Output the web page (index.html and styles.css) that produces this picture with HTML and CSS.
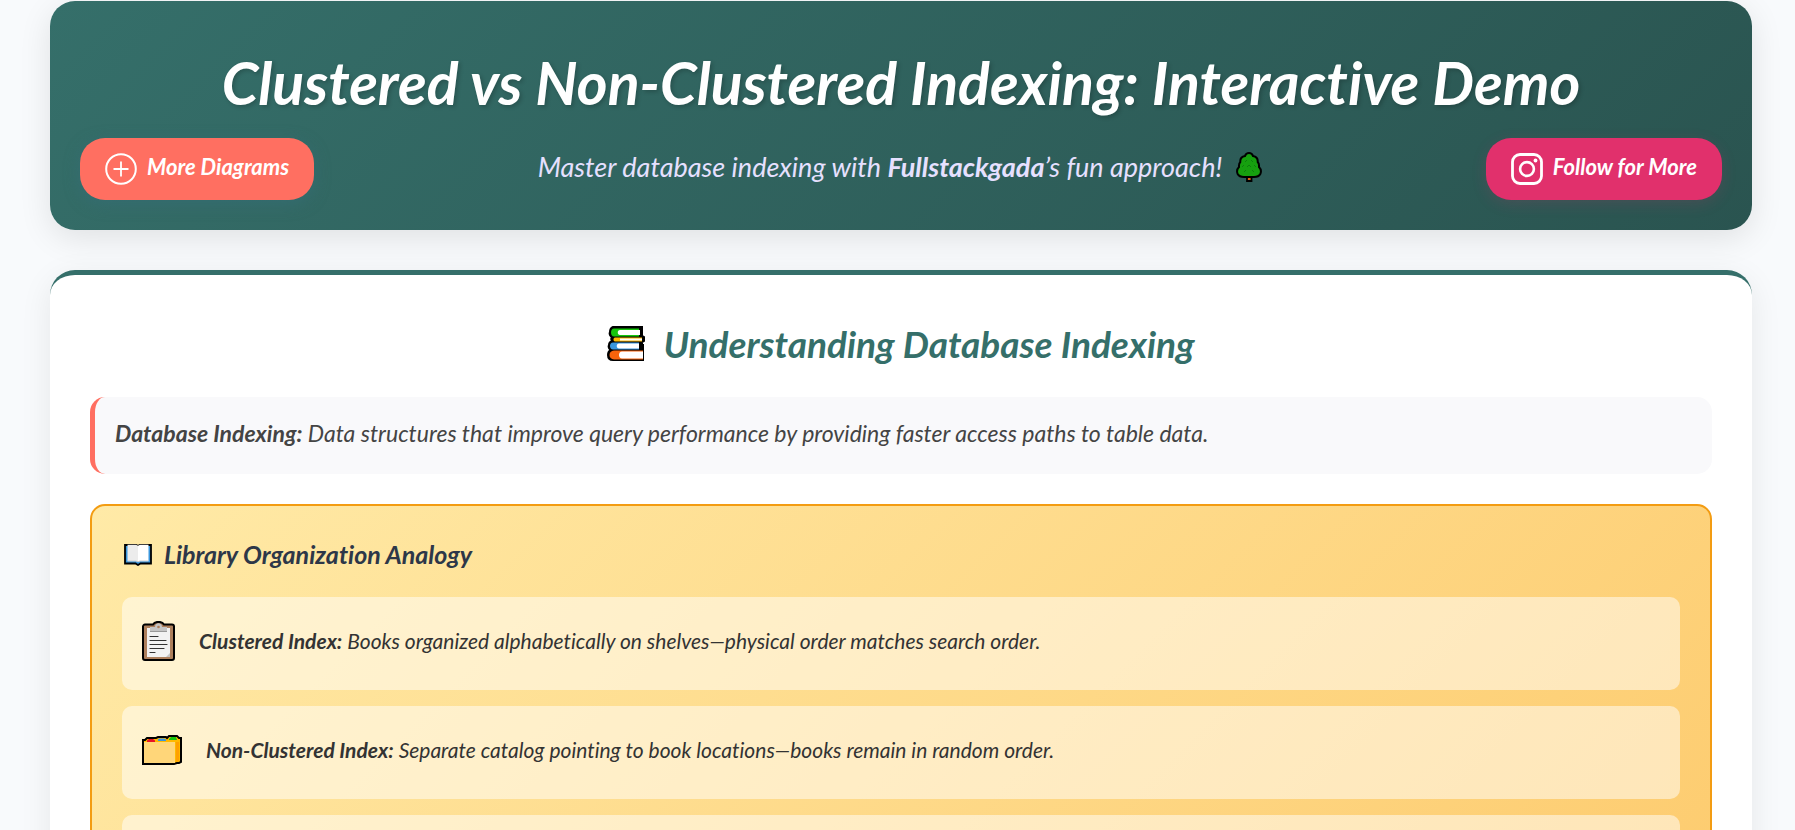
FILE: index.html
```html
<!DOCTYPE html>
<html lang="en">
<head>
<meta charset="utf-8">
<meta name="viewport" content="width=device-width, initial-scale=1">
<title>Clustered vs Non-Clustered Indexing: Interactive Demo</title>
<link rel="stylesheet" href="styles.css">
</head>
<body>
<div class="container">
  <header class="header">
    <h1 class="title">Clustered vs Non-Clustered Indexing: Interactive Demo</h1>
    <div class="header-row">
      <a class="btn btn-diagrams" href="#diagrams">
        <svg class="btn-icon" viewBox="0 0 32 32" fill="none" stroke="#fff" aria-hidden="true"><circle cx="16" cy="16" r="14.8" stroke-width="2"/><path d="M16 8.500v15M8.500 16h15" stroke-width="1.800"/></svg>
        <span>More Diagrams</span>
      </a>
      <p class="subtitle"><span>Master database indexing with <strong>Fullstackgada</strong>’s fun approach!</span>
        <svg class="tree" viewBox="0 0 26 30" aria-hidden="true"><path d="M11 23h4.500v6H11z" fill="#e2610e" stroke="#000" stroke-width="1.800"/><path d="M13 1C10.500 1 9.500 2.500 9 4 6 4.500 4 6.500 4.300 10 2.500 12 3 13.500 3 15 1 17 .8 20 1.700 22c1 2 3.300 3 6.300 3h10c3 0 5.300-1 6.300-3 .9-2 .7-5-1.300-7 0-1.500.5-3-1.300-5C22 6.500 20 4.500 17 4c-.5-1.500-1.500-3-4-3Z" fill="#16a00f" stroke="#000" stroke-width="2"/><path d="m9 10 2-2m4 0 2 2M6 15l2-2m3 2 2-2 2 2m3-2 2 2M8 20l2-2m6 0 2 2" fill="none" stroke="#0c7f0c" stroke-width="1"/></svg>
      </p>
      <a class="btn btn-follow" href="#follow">
        <svg class="btn-icon" viewBox="0 0 32 32" fill="none" stroke="#fff" aria-hidden="true"><rect x="1.500" y="1.500" width="29" height="29" rx="7.500" stroke-width="2.800"/><circle cx="16" cy="16" r="6.900" stroke-width="2.600"/><circle cx="24.500" cy="7.500" r="1.900" fill="#fff" stroke="none"/></svg>
        <span>Follow for More</span>
      </a>
    </div>
  </header>

  <main class="card">
    <h2 class="card-title">
      <svg class="books" viewBox="0 0 38 36" aria-hidden="true"><path d="M6 1h29v9l2 1v4l-2 1v3h1v15H6c-3 0-5-2-5-5 0-3 1-4 3-5-2-1-3-3-2-5 0-2 1-3 3-4-1-1-1-3 0-4-2-1-3-3-2-5 0-3 1-4 3-5Z" fill="#000" stroke="#000" stroke-width="2"/><path d="M7 2.500h25v8H7c-4 0-4-8 0-8Z" fill="#16c60c"/><path d="M13 4h20v5H13c-3 0-3-5 0-5Z" fill="#fff"/><path d="M8 11.500h27v4H8c-2 0-2-4 0-4Z" fill="#ffb900"/><path d="M13 12.500h22v2H13Z" fill="#fff"/><path d="M6 16.500h26v7H6c-4 0-4-7 0-7Z" fill="#3a96dd"/><path d="M12 17.500h20v5H12c-3 0-3-5 0-5Z" fill="#fff"/><path d="M7 24.500h29v9H7c-6 0-6-9 0-9Z" fill="#f7630c"/><path d="M15 25.500h21v7H15c-4 0-4-7 0-7Z" fill="#fff"/></svg>
      <span>Understanding Database Indexing</span>
    </h2>

    <p class="definition"><strong>Database Indexing:</strong> Data structures that improve query performance by providing faster access paths to table data.</p>

    <section class="analogy">
      <h3 class="analogy-title">
        <svg class="open-book" viewBox="0 0 28 23" aria-hidden="true"><path d="M1 2h11l2 .8L16 2h11v18.500H16.500L14 22l-2.500-1.500H1Z" fill="#3a96dd" stroke="#000" stroke-width="1.800"/><path d="M3.500 1.800H12l2 1v16l-2-.8H3.500Z" fill="#ececec"/><path d="M24.500 1.800H16l-2 1v16l2-.8h8.500Z" fill="#fff"/><path d="M3.500 18H12l2 .8 2-.8h8.500" fill="none" stroke="#ccc"/></svg>
        <span>Library Organization Analogy</span>
      </h3>
      <ul class="items">
        <li class="item">
          <svg class="clipboard" viewBox="0 0 33 40" aria-hidden="true"><path d="M3 3.500h8C13 0 20 0 22 3.500h8a2 2 0 0 1 2 2V37a2 2 0 0 1-2 2H3a2 2 0 0 1-2-2V5.500a2 2 0 0 1 2-2Z" fill="#ad7f5c" stroke="#000" stroke-width="2"/><path d="M5 7h23v27l-3 2H5Z" fill="#f2f2f2"/><path d="M8 10V6h5c0-5 7-5 7 0h5v4Z" fill="#c4c4c4"/><path d="M8 10.500h17" stroke="#999"/><circle cx="16.500" cy="6" r="1.300" fill="#ad7f5c"/><path d="M28 32v4h-4Z" fill="#c4c4c4"/><path d="M8 15.500h8M8 19.500h16M8 23.500h17M8 27.500h14M8 31.500h5" stroke="#333" stroke-width="1.200" stroke-linecap="round"/></svg>
          <p class="item-text"><strong>Clustered Index:</strong> Books organized alphabetically on shelves—physical order matches search order.</p>
        </li>
        <li class="item">
          <svg class="folders" viewBox="0 0 40 30" aria-hidden="true"><path d="M1 5h2l2-2h9l2-1h8l1 1 2-2h8l2 2h2v24l-2 1h-2l-3 1H1Z" fill="#ffb900" stroke="#000" stroke-width="2"/><path d="M5 7V5.500L7 4h4l2 1.500V7Z" fill="#e81224"/><path d="M16 6V4.500l1-1h5l2 1V6Z" fill="#3a96dd"/><path d="M27 5V4l2-2h5l1 3Z" fill="#16c60c"/><path d="M34 7h3v19l-3 1Z" fill="#ffa000"/><path d="M2 7h31v21H2Z" fill="#ffd679"/></svg>
          <p class="item-text"><strong>Non-Clustered Index:</strong> Separate catalog pointing to book locations—books remain in random order.</p>
        </li>
        <li class="item"></li>
      </ul>
    </section>
  </main>
</div>
</body>
</html>
```
FILE: styles.css
```css
* { box-sizing: border-box; margin: 0; padding: 0; }

html { scrollbar-width: none; }

body {
  background: #f8fafc;
  color: #333;
  font-family: Lato, "Open Sans", sans-serif;
  font-style: italic;
  font-variant-ligatures: none;
}

svg { display: block; flex: none; }

.container { padding: 1px 43px 40px 50px; }

.header {
  padding: 38px 30px 30px;
  border-radius: 25px;
  background: linear-gradient(135deg, #356f6a, #2a5450);
  box-shadow: 0 8px 32px rgba(0, 0, 0, 0.1);
  text-align: center;
}

.title {
  color: #fff;
  font-size: 59px;
  line-height: 87px;
  font-weight: 700;
  text-shadow: 2px 2px 4px rgba(0, 0, 0, 0.2);
}

.header-row {
  display: flex;
  justify-content: space-between;
  align-items: center;
  margin-top: 12px;
}

.btn {
  display: flex;
  align-items: center;
  gap: 10px;
  padding: 15px 25px;
  border-radius: 25px;
  color: #fff;
  font-size: 22px;
  line-height: 32px;
  font-weight: 700;
  text-decoration: none;
}

.btn span { padding-bottom: 4px; line-height: 28px; }
.btn-diagrams { background: #ff6f61; box-shadow: 0 4px 15px rgba(53, 110, 120, 0.6); }
.btn-follow { background: #e1306c; box-shadow: 0 4px 15px rgba(225, 48, 108, 0.15); }
.btn-icon { width: 32px; height: 32px; }

.subtitle {
  display: flex;
  align-items: center;
  gap: 14px;
  padding-bottom: 5px;
  color: #e6e0ff;
  font-size: 27px;
  line-height: 32px;
}

.tree { width: 26px; height: 30px; }

.card {
  margin-top: 40px;
  padding: 40px 40px;
  border-top: 5px solid #356f6a;
  border-radius: 25px;
  background: #fff;
  box-shadow: 0 8px 32px rgba(0, 0, 0, 0.08);
}

.card-title {
  display: flex;
  justify-content: center;
  align-items: center;
  gap: 18px;
  color: #356f6a;
  font-size: 37px;
  line-height: 57px;
}

.books { width: 38px; height: 36px; }

.definition {
  margin-top: 25px;
  padding: 18px 20px 22px;
  border-left: 5px solid #ff6f61;
  border-radius: 15px;
  background: #f9f9fb;
  color: #444;
  font-size: 23px;
  line-height: 37px;
}

.analogy {
  margin-top: 30px;
  padding: 30px;
  border: 2px solid #f39c12;
  border-radius: 15px;
  background: linear-gradient(135deg, #ffeaa7, #fdcb6e);
}

.analogy-title {
  display: flex;
  align-items: center;
  gap: 12px;
  color: #2d3748;
  font-size: 25px;
  line-height: 36px;
}

.open-book { width: 28px; height: 23px; margin-left: 2px; }

.items {
  display: flex;
  flex-direction: column;
  gap: 16px;
  margin-top: 25px;
  list-style: none;
}

.item {
  display: flex;
  align-items: center;
  gap: 24px;
  min-height: 93px;
  padding: 18px 20px 24px;
  border-radius: 10px;
  background: rgba(255, 255, 255, 0.5);
}

.clipboard { width: 33px; height: 40px; }
.folders { width: 40px; height: 30px; }
.item-text { font-size: 21px; line-height: 32px; }
```
